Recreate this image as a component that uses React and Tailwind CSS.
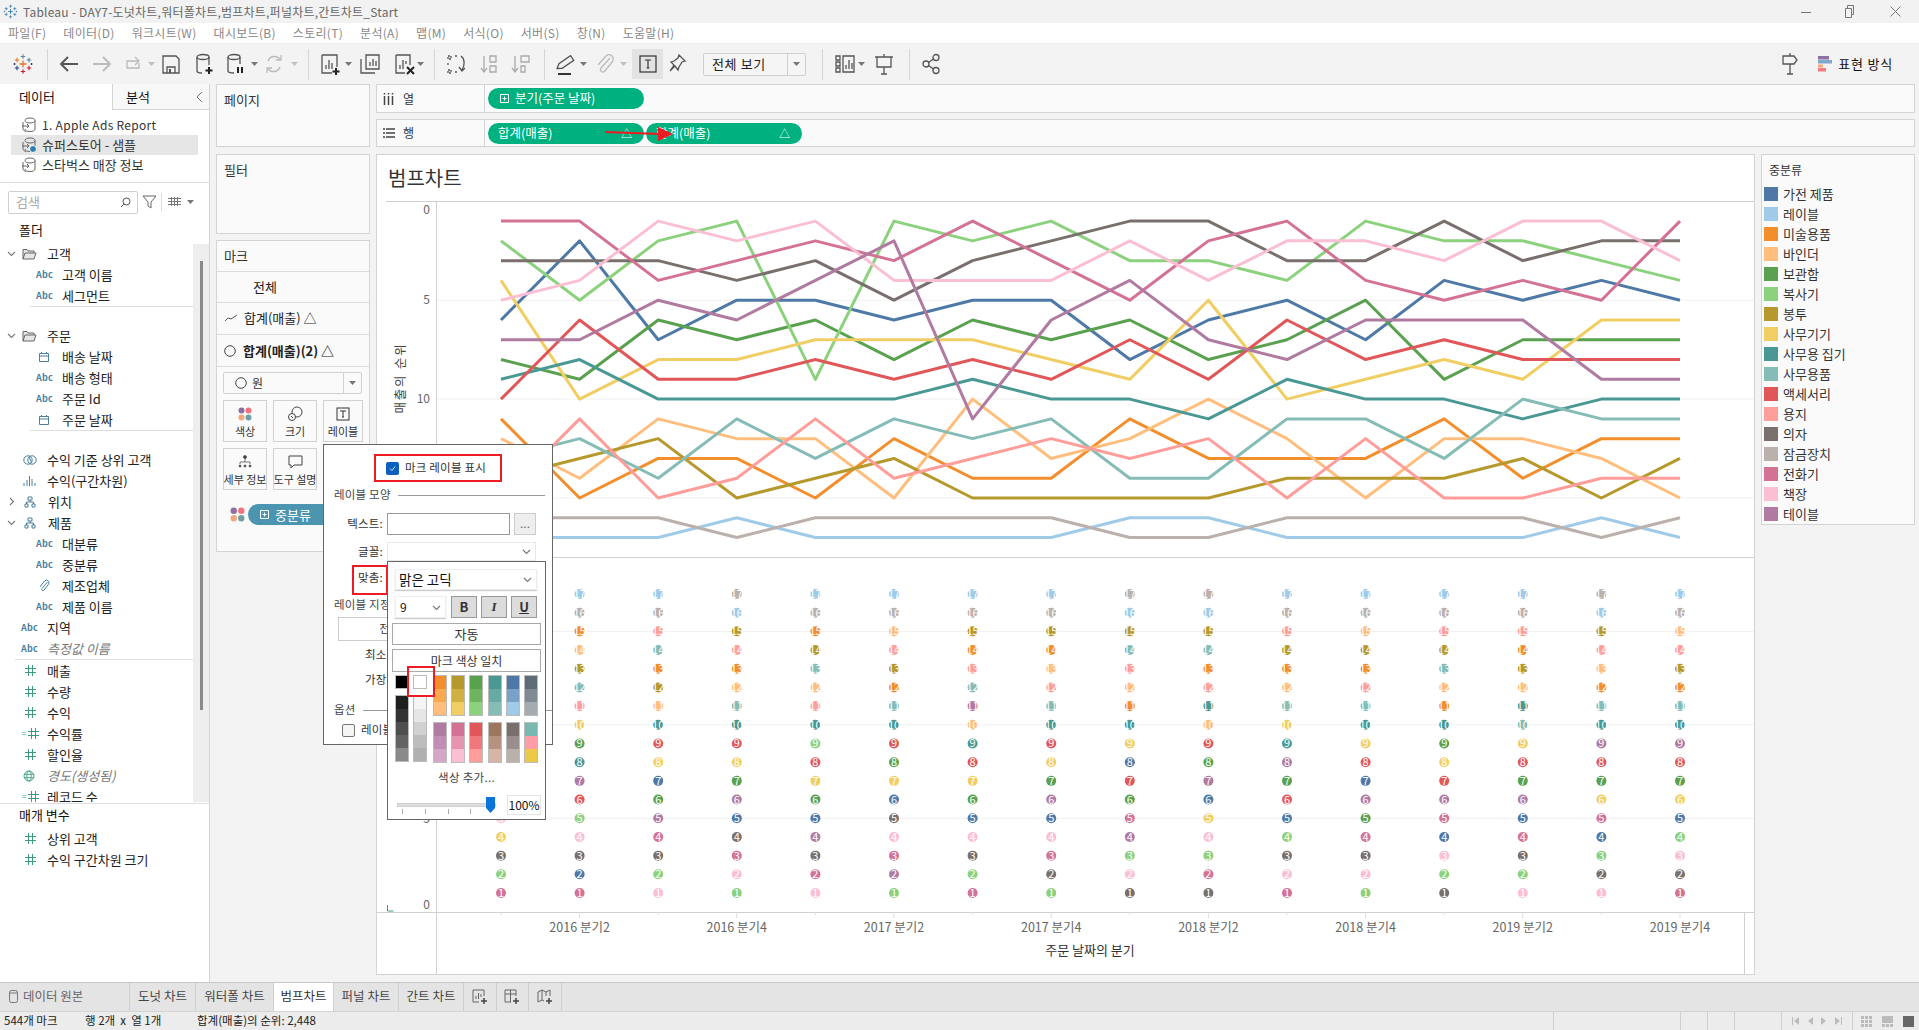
import { useState } from 'react';

const FONT = "font-['Noto_Sans_CJK_KR','Noto_Sans',sans-serif]";

const COLORS = {
  A: '#4e79a7', B: '#a0cbe8', C: '#f28e2b', D: '#ffbe7d', E: '#59a14f', F: '#8cd17d',
  G: '#b6992d', H: '#f1ce63', I: '#499894', J: '#86bcb6', K: '#e15759', L: '#ff9d9a',
  M: '#79706e', N: '#bab0ac', O: '#d37295', P: '#fabfd2', Q: '#b07aa1',
};

const LEGEND = [
  ['A', '가전 제품'], ['B', '레이블'], ['C', '미술용품'], ['D', '바인더'], ['E', '보관함'], ['F', '복사기'],
  ['G', '봉투'], ['H', '사무기기'], ['I', '사무용 집기'], ['J', '사무용품'], ['K', '액세서리'], ['L', '용지'],
  ['M', '의자'], ['N', '잠금장치'], ['O', '전화기'], ['P', '책장'], ['Q', '테이블'],
];

// one string per quarter, letters in rank order (rank 1 first)
const RANKS = [
  'OFMHPAQEIKCDJGLNB', 'OAMPFKQIEHLJGDCNB', 'PFMOQEAHKIDGCJLNB', 'FPOMAQEHKIJDCLGBN',
  'POMQAEHKFILDJGCNB', 'FQOPMAHEKIJCGLDNB', 'OFMPAEHKIDQJLCGNB', 'FMOPAQEHKIJLDCGNB',
  'MPFQOEKAHICDLJGBN', 'MOFPHAQEKDILCJGBN', 'OPMFAKEQIHJDCGLNB', 'FPMOEQAKHIJLCGDNB',
  'MFPAOQKHEICDJGLNB', 'PFMOAQEKHJIDGCLNB', 'PMFAOHEKQIJCDLGBN', 'OMPFAHEKQIJCGLDNB',
];

const QUARTERS = ['2016 분기2', '2016 분기4', '2017 분기2', '2017 분기4', '2018 분기2', '2018 분기4', '2019 분기2', '2019 분기4'];

const xAt = (i) => 501 + 78.6 * i;
const topY = (r) => 201.3 + 19.78 * r;
const lowY = (r) => 911.7 - 18.69 * r;

function Caret({ className = '' }) {
  return (
    <svg width="7" height="4" viewBox="0 0 7 4" className={`shrink-0 ${className}`}>
      <path d="M0 0h7L3.5 4z" fill="#777" />
    </svg>
  );
}

function Chevron({ open = true, className = '' }) {
  return (
    <svg width="9" height="9" viewBox="0 0 9 9" className={`shrink-0 ${className}`} fill="none" stroke="#777" strokeWidth="1.1">
      {open ? <path d="M1 3l3.5 3.5L8 3" /> : <path d="M3 1l3.5 3.5L3 8" />}
    </svg>
  );
}

function Sep({ className = '' }) {
  return <div className={`w-px h-[31px] bg-[#d6d6d6] shrink-0 ${className}`} />;
}

function TableauLogo({ size = 24, mono = false }) {
  const c = mono
    ? { o: '#3f7fb0', b: '#3f7fb0', r: '#3f7fb0', d: '#3f7fb0' }
    : { o: '#e8762b', b: '#5b879b', r: '#c72035', d: '#1f447d' };
  const cross = (x, y, s, col, w = 1.1) => (
    <path key={`${x}-${y}`} d={`M${x - s} ${y}H${x + s}M${x} ${y - s}V${y + s}`} stroke={col} strokeWidth={w} fill="none" />
  );
  return (
    <svg width={size} height={size} viewBox="0 0 24 24" className="shrink-0">
      {cross(12, 12, 3.5, c.o, 1.3)}
      {cross(12, 4.5, 2.2, c.b)}
      {cross(12, 19.5, 2.2, c.r)}
      {cross(6, 8, 2.2, c.o)}
      {cross(18, 8, 2.2, c.b)}
      {cross(6, 16, 2.2, c.d)}
      {cross(18, 16, 2.2, c.r)}
      {cross(3.5, 12, 1, c.d)}
      {cross(20.5, 12, 1, c.d)}
    </svg>
  );
}

function Ico({ children, className = '' }) {
  return (
    <svg width="24" height="24" viewBox="0 0 24 24" fill="none" stroke="#555" strokeWidth="1.3" className={`shrink-0 ${className}`}>
      {children}
    </svg>
  );
}

function Toolbar() {
  return (
    <div className="h-[41px] bg-[#f3f3f3] border-t border-[#ececec] flex items-center pl-[11px] pr-[26px] shrink-0">
      <TableauLogo />
      <Sep className="ml-[12px]" />
      <Ico className="ml-[9px]"><path d="M21 12H4M11 5l-7 7 7 7" strokeWidth="1.9" /></Ico>
      <Ico className="ml-[9px]"><path d="M3 12h17M13 5l7 7-7 7" stroke="#bbb" strokeWidth="1.9" /></Ico>
      <Ico className="ml-[7px]"><path d="M17 9H6v7h12v-5M14 5l4 4-4 4" stroke="#bbb" /></Ico>
      <Caret className="ml-[3px] opacity-40" />
      <Ico className="ml-[4px]"><path d="M4 4h13l3 3v14H4zM8 21v-6h8v6" /><path d="M10 17h2v4h-2z" fill="#555" stroke="none" /></Ico>
      <Ico className="ml-[9px]">
        <ellipse cx="11" cy="5" rx="6" ry="2.5" /><path d="M5 5v14c0 1 2 2 5 2M17 5v8" />
        <path d="M17 15v7M13.5 18.500h7" strokeWidth="2" stroke="#222" />
      </Ico>
      <Ico className="ml-[7px]">
        <ellipse cx="11" cy="5" rx="6" ry="2.5" /><path d="M5 5v14c0 1 2 2 6 2M17 5v7" />
        <path d="M15 15v6M19 15v6" strokeWidth="2" stroke="#222" />
      </Ico>
      <Caret className="ml-[4px]" />
      <Ico className="ml-[4px]"><path d="M6 9a7 7 0 0 1 12-2M18 15a7 7 0 0 1-12 2" stroke="#bbb" strokeWidth="1.5" /><path d="M19 3v5h-5M5 21v-5h5" stroke="#bbb" /></Ico>
      <Caret className="ml-[5px] opacity-40" />
      <Sep className="ml-[10px]" />
      <Ico className="ml-[9px]">
        <path d="M4 3h15v12M4 3v18h10" /><path d="M8 17v-4M11 17V8M14 17v-6" />
        <path d="M18 16v7M14.500 19.500h7" strokeWidth="2" stroke="#222" />
      </Ico>
      <Caret className="ml-[3px]" />
      <Ico className="ml-[6px]">
        <path d="M8 3h13v14H8z" /><path d="M3 7v14h14" /><path d="M12 14v-4M15 14V7M18 14v-5" />
      </Ico>
      <Ico className="ml-[10px]">
        <path d="M4 3h14v10M4 3v18h9" /><path d="M8 17v-4M11 17V8M14 12v-3" />
        <path d="M15 15l7 7M22 15l-7 7" strokeWidth="2" stroke="#222" />
      </Ico>
      <Caret className="ml-[1px]" />
      <Sep className="ml-[10px]" />
      <Ico className="ml-[9px]">
        <path d="M4 4h3v3H4zM11 4h3M4 11v3M4 18h3v3H4zM11 20h2" strokeDasharray="2 1" />
        <path d="M17 4c4 3 4 9 1 14M15 15l3 4 3-3" />
      </Ico>
      <Ico className="ml-[9px]"><path d="M7 4v15M4 16l3 4 3-4" stroke="#aaa" /><path d="M13 4h6v6h-6zM13 14h6v6h-6z" stroke="#aaa" /></Ico>
      <Ico className="ml-[7px]"><path d="M7 4v15M4 16l3 4 3-4" stroke="#aaa" /><path d="M13 4h8v6h-8zM13 14h4v6h-4z" stroke="#aaa" /></Ico>
      <Sep className="ml-[12px]" />
      <Ico className="ml-[9px]">
        <path d="M15 3l4 4L9 17l-5 1 1-5z" transform="rotate(10 12 12)" />
        <path d="M4 22h13" stroke="#333" strokeWidth="2" />
      </Ico>
      <Caret className="ml-[2px]" />
      <Ico className="ml-[5px]"><path d="M18 6l-9 10a2.500 2.500 0 0 0 3.500 3.500L20 10a4 4 0 0 0-6-6l-8 9" stroke="#bbb" /></Ico>
      <Caret className="ml-[4px] opacity-40" />
      <div className="ml-[5px] w-[31px] h-[30px] bg-[#e3e3e3] flex items-center justify-center shrink-0">
        <svg width="18" height="18" viewBox="0 0 18 18" fill="none" stroke="#333" strokeWidth="1.2">
          <rect x="1" y="1" width="16" height="16" /><path d="M6 5h6M9 5v8M7.500 13h3" />
        </svg>
      </div>
      <Ico className="ml-[2px]"><path d="M14 3l6 6-3 1-3 5-1 3-3-4-5 5 4-6-3-3 3-1 4-3z" /></Ico>
      <div className="ml-[14px] w-[103px] h-[23px] bg-[#f5f5f5] border border-[#d0d0d0] rounded-[2px] flex items-center shrink-0">
        <span className="flex-1 pl-[8px] text-[13px] tracking-[0.6px] text-[#222] whitespace-nowrap">전체 보기</span>
        <div className="w-[18px] h-full border-l border-[#d0d0d0] flex items-center justify-center"><Caret /></div>
      </div>
      <Sep className="ml-[16px]" />
      <Ico className="ml-[10px]">
        <path d="M3 4h4v4H3zM3 10h4v4H3zM3 16h4v4H3zM10 4h11v16H10z" />
        <path d="M13 17v-4M16 17V8M19 17v-6" />
      </Ico>
      <Caret className="ml-[1px]" />
      <Ico className="ml-[7px]">
        <path d="M3 5h18M5 5v10h14V5M12 15v7M9 22h6M12 2v3" />
      </Ico>
      <Sep className="ml-[13px]" />
      <Ico className="ml-[9px]">
        <circle cx="7" cy="12" r="3" /><circle cx="17" cy="5.500" r="3" /><circle cx="17" cy="18.500" r="3" />
        <path d="M9.500 10.500l5-3.500M9.500 13.500l5 3.500" />
      </Ico>
      <Ico className="ml-auto mr-[16px]">
        <path d="M12 1v3M5 4h11l3 4-3 4H5zM12 12v10M9 22h6" />
      </Ico>
      <svg width="14" height="16" viewBox="0 0 14 16" className="shrink-0">
        <rect width="11" height="3.500" fill="#8a72a3" />
        <rect y="4" width="14" height="3.500" fill="#7ea6cf" />
        <rect y="8.500" width="5" height="3" fill="#f7a77c" />
        <rect y="12" width="8" height="3.500" fill="#f27c80" />
      </svg>
      <span className="ml-[6px] text-[13px] tracking-[0.8px] text-[#111] whitespace-nowrap">표현 방식</span>
    </div>
  );
}

function AbcIcon() {
  return <span className="text-[9px] font-bold text-[#4a7f9e] w-[26px] shrink-0 tracking-[0.2px]">Abc</span>;
}

function FieldIcon({ type }) {
  if (type === 'abc') return <AbcIcon />;
  const box = 'w-[26px] shrink-0 flex pl-[2px]';
  const blue = '#4a7f9e';
  const green = '#3f9c7a';
  if (type === 'date') {
    return (
      <span className={box}><svg width="12" height="12" viewBox="0 0 12 12" fill="none" stroke={blue}><path d="M1.500 2.500h9v8h-9zM1.500 5h9M3.500 1v2M8.500 1v2" /></svg></span>
    );
  }
  if (type === 'num' || type === 'calc') {
    return (
      <span className="w-[26px] shrink-0 flex items-center justify-center pr-[8px] relative">
        {type === 'calc' && <span className="text-[9px] leading-none text-[#3f9c7a] mr-px">=</span>}
        <svg width="11" height="11" viewBox="0 0 11 11" fill="none" stroke={green}><path d="M3.500 0v11M7.500 0v11M0 3.500h11M0 7.500h11" /></svg>
      </span>
    );
  }
  if (type === 'globe') {
    return (
      <span className={box}><svg width="12" height="12" viewBox="0 0 12 12" fill="none" stroke={green} strokeWidth="0.9"><circle cx="6" cy="6" r="5" /><ellipse cx="6" cy="6" rx="2.200" ry="5" /><path d="M1 4.300h10M1 7.700h10" /></svg></span>
    );
  }
  if (type === 'set') {
    return (
      <span className={box}><svg width="14" height="12" viewBox="0 0 14 12" fill="none" stroke={blue}><circle cx="5" cy="6" r="4.200" /><circle cx="9" cy="6" r="4.200" /><path d="M6 3l3 6" /></svg></span>
    );
  }
  if (type === 'bin') {
    return (
      <span className={box}><svg width="13" height="11" viewBox="0 0 13 11" fill="none" stroke={blue}><path d="M1 8v3M4 5v6M6.500 1v10M9 4v7M12 8v3" /></svg></span>
    );
  }
  if (type === 'tree') {
    return (
      <span className={box}><svg width="12" height="12" viewBox="0 0 12 12" fill="none" stroke={blue}><path d="M4 1h4v3H4zM1 8h3v3H1zM8 8h3v3H8zM6 4v2M2.500 8V6h7v2" /></svg></span>
    );
  }
  if (type === 'clip') {
    return (
      <span className={box}><svg width="12" height="13" viewBox="0 0 12 13" fill="none" stroke={blue}><path d="M9.500 3L4 9.500a1.300 1.300 0 0 0 2 1.700l4.500-6a2.600 2.600 0 0 0-4-3.300L2 8" /></svg></span>
    );
  }
  if (type === 'folder') {
    return (
      <span className="w-[25px] shrink-0 flex"><svg width="15" height="12" viewBox="0 0 15 12" fill="#e6e6e6" stroke="#666"><path d="M1 11V1.500h4l1 1.500h6v2M1 11l2-6h11l-2 6z" /></svg></span>
    );
  }
  return <span className="w-[26px] shrink-0" />;
}

function Field({ type, label, depth = 0, italic = false }) {
  return (
    <div className={`h-[21px] flex items-center whitespace-nowrap ${depth ? 'pl-[36px]' : 'pl-[21px]'}`}>
      <FieldIcon type={type} />
      <span className={italic ? 'italic text-[#777]' : 'text-[#222]'}>{label}</span>
    </div>
  );
}

function Group({ label, type = 'folder', open = true }) {
  return (
    <div className="h-[21px] flex items-center pl-[7px] whitespace-nowrap">
      <Chevron open={open} className="mr-[6px]" />
      <FieldIcon type={type} />
      <span className="text-[#222]">{label}</span>
    </div>
  );
}

function DbIcon({ ok }) {
  return (
    <svg width="16" height="16" viewBox="0 0 16 16" fill="none" stroke="#666" className="shrink-0">
      <path d="M4 3.500C4 2 6 1 9 1s5 1 5 2.500V12c0 1.500-2 2.500-5 2.500S4 13.500 4 12" />
      <path d="M4 3.500C4 5 6 6 9 6s5-1 5-2.500" />
      <path d="M2 5v7c0 1 1 2 3 2.500M1 9h7M6 7l2 2-2 2" />
      {ok && <circle cx="12" cy="12" r="3.500" fill="#2f7fb0" stroke="#fff" />}
    </svg>
  );
}

function DataPane() {
  const sources = [
    ['1. Apple Ads Report', false, 'text-[12px] tracking-[0.3px]'],
    ['슈퍼스토어 - 샘플', true, ''],
    ['스타벅스 매장 정보', false, ''],
  ];
  return (
    <div className="w-[210px] shrink-0 bg-white border-r border-[#d4d4d4] flex flex-col text-[13px]">
      <div className="flex h-[26px] shrink-0">
        <div className="w-[112px] pl-[19px] flex items-center text-[#111]">데이터</div>
        <div className="flex-1 bg-[#f8f8f8] border-l border-b border-[#d4d4d4] pl-[13px] pr-[6px] flex items-center justify-between text-[#111]">
          분석
          <svg width="8" height="12" viewBox="0 0 8 12" fill="none" stroke="#777"><path d="M7 1L2 6l5 5" /></svg>
        </div>
      </div>
      <div className="mt-[5px] mx-[11px] text-[#333]">
        {sources.map(([name, sel, cls]) => (
          <div key={name} className={`h-[20px] flex items-center pl-[10px] whitespace-nowrap ${sel ? 'bg-[#e6e6e6]' : ''}`}>
            <DbIcon ok={sel} />
            <span className={`ml-[5px] ${cls}`}>{name}</span>
          </div>
        ))}
      </div>
      <div className="mt-[7px] h-px bg-[#dedede]" />
      <div className="mt-[8px] flex items-center pl-[8px] h-[22px]">
        <div className="w-[130px] h-[23px] border border-[#cfcfcf] rounded-[2px] flex items-center justify-between pl-[7px] pr-[6px] text-[#aaa]">
          검색
          <svg width="11" height="11" viewBox="0 0 11 11" fill="none" stroke="#555"><circle cx="6.500" cy="4.500" r="3.500" /><path d="M4 7l-3 3" /></svg>
        </div>
        <svg width="15" height="14" viewBox="0 0 15 14" fill="none" stroke="#666" className="ml-[4px]"><path d="M1 1h13L9 7v6l-3-2V7z" /></svg>
        <div className="ml-[4px] w-px h-[18px] bg-[#ddd]" />
        <svg width="13" height="10" viewBox="0 0 13 10" className="ml-[6px]" fill="none" stroke="#777"><path d="M0 1.500h13M0 4.500h13M0 7.500h13M3.500 0v9M6.500 0v9M9.500 0v9" /></svg>
        <Caret className="ml-[6px]" />
      </div>
      <div className="mt-[7px] h-[20px] pl-[19px] flex items-center text-[#111]">폴더</div>
      <div className="mt-[4px] h-[558px] flex overflow-hidden shrink-0">
        <div className="flex-1 min-w-0 -mt-px">
          <Group label="고객" />
          <Field depth={1} type="abc" label="고객 이름" />
          <Field depth={1} type="abc" label="세그먼트" />
          <div className="ml-[30px] h-px bg-[#dedede] mb-[18px]" />
          <Group label="주문" />
          <Field depth={1} type="date" label="배송 날짜" />
          <Field depth={1} type="abc" label="배송 형태" />
          <Field depth={1} type="abc" label="주문 Id" />
          <Field depth={1} type="date" label="주문 날짜" />
          <div className="ml-[30px] h-px bg-[#dedede] mb-[18px]" />
          <Field type="set" label="수익 기준 상위 고객" />
          <Field type="bin" label="수익(구간차원)" />
          <Group label="위치" type="tree" open={false} />
          <Group label="제품" type="tree" />
          <Field depth={1} type="abc" label="대분류" />
          <Field depth={1} type="abc" label="중분류" />
          <Field depth={1} type="clip" label="제조업체" />
          <Field depth={1} type="abc" label="제품 이름" />
          <Field type="abc" label="지역" />
          <Field type="abc" label="측정값 이름" italic />
          <div className="ml-[15px] h-px bg-[#dedede]" />
          <Field type="num" label="매출" />
          <Field type="num" label="수량" />
          <Field type="num" label="수익" />
          <Field type="calc" label="수익률" />
          <Field type="num" label="할인율" />
          <Field type="globe" label="경도(생성됨)" italic />
          <Field type="calc" label="레코드 수" />
        </div>
        <div className="w-[16px] bg-[#eeeeee] shrink-0 pl-[7px] pt-[17px]">
          <div className="w-[2.500px] h-[449px] bg-[#8a8a8a]" />
        </div>
      </div>
      <div className="mt-px h-px bg-[#dedede]" />
      <div className="mt-[1px] h-[20px] pl-[19px] flex items-center text-[#111]">매개 변수</div>
      <div className="mt-[3px]">
        <Field type="num" label="상위 고객" />
        <Field type="num" label="수익 구간차원 크기" />
      </div>
    </div>
  );
}

function ColorDots({ size = 14 }) {
  return (
    <svg width={size} height={size} viewBox="0 0 14 14" className="shrink-0">
      <circle cx="3.500" cy="3.500" r="3" fill="#8e6e9e" />
      <circle cx="10.500" cy="3.500" r="3" fill="#f4727f" />
      <circle cx="3.500" cy="10.500" r="3" fill="#f2a77c" />
      <circle cx="10.500" cy="10.500" r="3" fill="#6fa0a8" />
    </svg>
  );
}

function MarkBtn({ label, w, children }) {
  return (
    <div className={`h-[42px] border border-[#d2d2d2] flex flex-col items-center justify-center shrink-0 ${w}`}>
      <div className="h-[20px] flex items-center">{children}</div>
      <span className="text-[11px] leading-[15px] text-[#333] whitespace-nowrap">{label}</span>
    </div>
  );
}

function MarksCard() {
  const row = 'border-t border-[#dcdcdc] flex items-center text-[13px] text-[#222] whitespace-nowrap';
  return (
    <div className="h-[312px] bg-[#fafafa] border border-[#d4d4d4] flex flex-col overflow-hidden">
      <div className="h-[30px] pl-[7px] flex items-center text-[13px] text-[#333]">마크</div>
      <div className={`${row} h-[31px] pl-[36px]`}>전체</div>
      <div className={`${row} h-[32px] pl-[7px] pb-[2px]`}>
        <svg width="14" height="8" viewBox="0 0 14 8" fill="none" stroke="#555" className="mr-[6px]"><path d="M1 7l3-3 3 1 6-4" /></svg>
        합계(매출) △
      </div>
      <div className={`${row} h-[32px] pl-[7px] font-bold`}>
        <svg width="12" height="12" viewBox="0 0 12 12" fill="none" stroke="#444" className="mr-[7px]"><circle cx="6" cy="6" r="5.300" /></svg>
        합계(매출)(2) △
      </div>
      <div className="border-t border-[#dcdcdc] pt-[5px] pl-[6px]">
        <div className="w-[139px] h-[22px] border border-[#d2d2d2] rounded-[2px] flex items-center">
          <svg width="12" height="12" viewBox="0 0 12 12" fill="none" stroke="#444" className="ml-[11px]"><circle cx="6" cy="6" r="5.300" /></svg>
          <span className="ml-[5px] flex-1 text-[12px] text-[#333]">원</span>
          <div className="w-[18px] h-full border-l border-[#d2d2d2] flex items-center justify-center"><Caret /></div>
        </div>
        <div className="mt-[6px] flex gap-x-[6px]">
          <MarkBtn label="색상" w="w-[44px]"><ColorDots /></MarkBtn>
          <MarkBtn label="크기" w="w-[44px]">
            <svg width="16" height="16" viewBox="0 0 16 16" fill="none" stroke="#444"><circle cx="10" cy="6" r="5" /><circle cx="5" cy="11" r="3.500" fill="#fafafa" /><path d="M4 10l2 2" /></svg>
          </MarkBtn>
          <MarkBtn label="레이블" w="w-[40px]">
            <svg width="14" height="14" viewBox="0 0 14 14" fill="none" stroke="#333"><rect x="1" y="1" width="12" height="12" /><path d="M4 4h6M7 4v6M6 10h2" /></svg>
          </MarkBtn>
        </div>
        <div className="mt-[6px] flex gap-x-[6px]">
          <MarkBtn label="세부 정보" w="w-[44px]">
            <svg width="14" height="14" viewBox="0 0 14 14" fill="#444" stroke="#444" strokeWidth="0.7"><circle cx="7" cy="2" r="1.500" /><path d="M7 3v4M2 9V7h10v2" fill="none" /><circle cx="2" cy="11" r="1" /><circle cx="7" cy="11" r="1" /><circle cx="12" cy="11" r="1" /></svg>
          </MarkBtn>
          <MarkBtn label="도구 설명" w="w-[44px]">
            <svg width="15" height="14" viewBox="0 0 15 14" fill="none" stroke="#444"><path d="M1 1h13v9H6l-3 3v-3H1z" /></svg>
          </MarkBtn>
        </div>
        <div className="mt-[14px] ml-[7px] flex items-center">
          <ColorDots size={15} />
          <div className="ml-[3px] w-[90px] h-[21px] rounded-l-[11px] bg-[#4b95b0] flex items-center pl-[12px] text-[13px] text-white whitespace-nowrap">
            <svg width="9" height="9" viewBox="0 0 9 9" fill="none" stroke="#fff" className="mr-[6px]"><path d="M.5.500h8v8h-8zM2.500 4.500h4M4.500 2.500v4" /></svg>
            중분류
          </div>
        </div>
      </div>
    </div>
  );
}

function Pill({ children, w = 'w-[156px]', className = '' }) {
  return (
    <div className={`h-[21px] rounded-[11px] bg-[#00b180] flex items-center text-[12.500px] text-white whitespace-nowrap shrink-0 ${w} ${className}`}>
      {children}
    </div>
  );
}

function Shelf({ h, icon, label, children }) {
  return (
    <div className={`${h} bg-[#fafafa] border border-[#d4d4d4] flex items-center`}>
      <div className="w-[108px] h-full border-r border-[#d4d4d4] flex items-center pl-[6px] text-[12px] text-[#333] shrink-0">
        <span className="w-[20px]">{icon}</span>
        {label}
      </div>
      <div className="pl-[3px] flex gap-[2px]">{children}</div>
    </div>
  );
}

function Chart() {
  return (
    <svg viewBox="377 201 1377 773" className="block w-[1377px] h-[773px]">
      {/* panes */}
      <path d="M386 201.500H1754M386 557.500H1754M377 912.500H1754" stroke="#d0d0d0" fill="none" />
      <path d="M436.500 201V974" stroke="#d0d0d0" />
      <path d="M1744.500 912V974" stroke="#d0d0d0" />
      {[5, 10, 15].map((r) => (
        <g key={r}>
          <path d={`M437 ${topY(r)}H1754`} stroke="#f0f0f0" />
          <path d={`M437 ${lowY(r)}H1754`} stroke="#f0f0f0" />
        </g>
      ))}
      {/* rank lines */}
      {LEGEND.map(([key]) => (
        <polyline
          key={key}
          fill="none"
          stroke={COLORS[key]}
          strokeWidth="3"
          strokeLinejoin="round"
          points={RANKS.map((col, i) => `${xAt(i)},${topY(col.indexOf(key) + 1)}`).join(' ')}
        />
      ))}
      {/* rank dots */}
      {RANKS.map((col, i) =>
        col.split('').map((key, r) => (
          <g key={`${i}-${key}`}>
            <circle cx={xAt(i)} cy={lowY(r + 1)} r="5" fill={COLORS[key]} />
            <text x={xAt(i)} y={lowY(r + 1) + 4} textAnchor="middle" fontSize="11" fill="#fff">{r + 1}</text>
          </g>
        ))
      )}
      {/* axis labels */}
      <g fontSize="12" fill="#666" textAnchor="end">
        <text x="430" y="214">0</text>
        <text x="430" y="304">5</text>
        <text x="430" y="403">10</text>
        <text x="430" y="636">15</text>
        <text x="430" y="729">10</text>
        <text x="430" y="823">5</text>
        <text x="430" y="909">0</text>
      </g>
      <text transform="translate(405 378) rotate(-90)" textAnchor="middle" fontSize="12.500" letterSpacing="1.800" fill="#444">매출의 순위</text>
      {RANKS.map((_, i) => (
        <path key={i} d={`M${xAt(i)} 912V${i % 2 ? 918 : 915}`} stroke="#ddd" />
      ))}
      {QUARTERS.map((q, i) => (
        <text key={q} x={xAt(i * 2 + 1)} y="932" textAnchor="middle" fontSize="12.500" fill="#666">{q}</text>
      ))}
      <text x="1090" y="955" textAnchor="middle" fontSize="13" fill="#333">주문 날짜의 분기</text>
      <path d="M387.500 905v6h6" stroke="#3f9c7a" fill="none" />
    </svg>
  );
}

function Legend() {
  return (
    <div className="w-[154px] h-[371px] bg-[#fafafa] border border-[#d4d4d4] pt-[7px] pl-[2px] shrink-0 text-[13px] text-[#333]">
      <div className="h-[16px] pl-[5px] flex items-center text-[12px]">중분류</div>
      <div className="mt-[6px]">
        {LEGEND.map(([key, name]) => (
          <div key={key} className="h-[20px] flex items-center whitespace-nowrap">
            <svg width="14" height="14" className="shrink-0"><rect width="14" height="14" fill={COLORS[key]} /></svg>
            <span className="ml-[5px]">{name}</span>
          </div>
        ))}
      </div>
    </div>
  );
}

function Check({ on }) {
  return on ? (
    <span className="w-[13px] h-[13px] rounded-[2px] bg-[#0a5fbf] flex items-center justify-center shrink-0">
      <svg width="9" height="9" viewBox="0 0 9 9" fill="none" stroke="#cfe2f7"><path d="M2 4.500l2 2 3-4" /></svg>
    </span>
  ) : (
    <span className="w-[13px] h-[13px] rounded-[2px] bg-[#f5f5f5] border border-[#777] shrink-0" />
  );
}

function Heading({ label, line = true, className = '' }) {
  return (
    <div className={`h-[16px] ml-[10px] flex items-center whitespace-nowrap text-[#444] ${className}`}>
      {label}
      {line && <div className="ml-[7px] flex-1 h-px bg-[#999]" />}
    </div>
  );
}

function LabelPopup() {
  const [shown] = useState(true);
  return (
    <div className="absolute left-[323px] top-[444px] w-[230px] h-[301px] bg-white border border-[#666] text-[11.500px] tracking-[0.2px] text-[#333]">
      <div className="mt-[9px] ml-[50px] w-[128px] h-[28px] border-2 border-[#ed1c24] flex items-center pl-[10px] whitespace-nowrap">
        <Check on={shown} />
        <span className="ml-[6px]">마크 레이블 표시</span>
      </div>
      <Heading label="레이블 모양" className="mt-[5px] mr-[7px]" />
      <div className="mt-[10px] flex items-center h-[22px]">
        <span className="w-[63px] pr-[4px] text-right">텍스트:</span>
        <div className="w-[123px] h-full border border-[#999]" />
        <div className="ml-[4px] w-[22px] h-full bg-[#eeeeee] border border-[#ccc] flex items-center justify-center text-[#666] leading-none">...</div>
      </div>
      <div className="mt-[7px] flex items-center h-[19px]">
        <span className="w-[63px] pr-[4px] text-right">글꼴:</span>
        <div className="w-[149px] h-full border border-[#e8e8e8] flex items-center justify-end pr-[4px]"><Chevron /></div>
      </div>
      <div className="mt-[9px] h-[16px] flex items-center">
        <span className="w-[63px] pr-[4px] text-right">맞춤:</span>
      </div>
      <Heading label="레이블 지정" line={false} className="mt-[11px]" />
      <div className="mt-[4px] ml-[14px] w-[104px] h-[24px] border border-[#ccc] flex items-center justify-center">전체</div>
      <div className="mt-[6px] h-[16px] pl-[41px] flex items-center whitespace-nowrap">최소값:</div>
      <div className="mt-[9px] h-[16px] pl-[41px] flex items-center whitespace-nowrap">가장 가까운</div>
      <Heading label="옵션" className="mt-[14px]" />
      <div className="mt-[4px] ml-[18px] h-[16px] flex items-center whitespace-nowrap">
        <Check on={false} />
        <span className="ml-[6px]">레이블 겹치기 허용</span>
      </div>
      <div className="absolute left-[28px] top-[120px] w-[36px] h-[30px] border-2 border-[#ed1c24]" />
    </div>
  );
}

const SWATCHES = [
  ['#f28e2b', '#fba94e', '#ffbe7d'], ['#b6992d', '#d0b043', '#f1ce63'], ['#59a14f', '#6eb45f', '#8cd17d'],
  ['#499894', '#67a9a3', '#86bcb6'], ['#4e79a7', '#78a2c8', '#a0cbe8'], ['#5f6b77', '#808a92', '#a5acaf'],
  ['#b07aa1', '#c28eb5', '#d4a6c8'], ['#d37295', '#e695b0', '#fabfd2'], ['#e15759', '#f1787a', '#ff9d9a'],
  ['#9d7660', '#b6917e', '#d7b5a6'], ['#79706e', '#9a8e8c', '#bab0ac'], ['#79b8b0', '#ff9da7', '#edc948'],
];

function ColorColumn({ cells, cell }) {
  return (
    <div className="w-[14px] border border-[#bbb] flex flex-col">
      {cells.map((c) => (
        <svg key={c} width="12" className={`block ${cell}`}><rect width="12" height="20" fill={c} /></svg>
      ))}
    </div>
  );
}

function FontPopup() {
  const boxBtn = 'w-[26px] h-full bg-[#dcdcdc] border border-[#999] flex items-center justify-center text-[13px] font-bold text-[#333]';
  const wideBtn = 'ml-[4px] w-[149px] border border-[#aaa] flex items-center justify-center';
  return (
    <div className="absolute left-[387px] top-[561px] w-[159px] h-[259px] bg-white border border-[#666] text-[11.500px] text-[#333]">
      <div className="mt-[7px] ml-[7px] w-[142px] h-[21px] border border-[#eee] shadow-[0_1px_1px_#ccc] flex items-center justify-between pl-[3px] pr-[4px] text-[13.500px] text-[#111] whitespace-nowrap">
        맑은 고딕
        <Chevron />
      </div>
      <div className="mt-[6px] ml-[7px] h-[22px] flex">
        <div className="w-[51px] h-full border border-[#eee] shadow-[0_1px_1px_#ccc] flex items-center justify-between pl-[4px] pr-[4px] text-[12px] text-[#111]">9<Chevron /></div>
        <div className="ml-[5px] flex gap-[4px] h-full">
          <div className={boxBtn}>B</div>
          <div className={`${boxBtn} italic font-['Liberation_Serif',serif]`}>I</div>
          <div className={`${boxBtn} underline`}>U</div>
        </div>
      </div>
      <div className={`${wideBtn} mt-[5px] h-[22px] text-[13px]`}>자동</div>
      <div className={`${wideBtn} mt-[4px] h-[23px] text-[12px]`}>마크 색상 일치</div>
      <div className="mt-[3px] ml-[7px] flex">
        <div className="flex flex-col gap-[6px]">
          <ColorColumn cells={['#000000']} cell="h-[12px]" />
          <ColorColumn cells={['#1f1f1f', '#333333', '#4f4f4f', '#636363', '#8a8a8a']} cell="h-[13px]" />
        </div>
        <div className="ml-[4px] flex flex-col gap-[6px]">
          <ColorColumn cells={['#ffffff']} cell="h-[12px]" />
          <ColorColumn cells={['#f5f5f5', '#e6e6e6', '#d1d1d1', '#bdbdbd', '#b0b0b0']} cell="h-[13px]" />
        </div>
        <div className="ml-[6px] grid grid-cols-[repeat(6,14px)] gap-x-[4.200px] gap-y-[6px]">
          {SWATCHES.map((cells) => <ColorColumn key={cells[0]} cells={cells} cell="h-[13px]" />)}
        </div>
      </div>
      <div className="mt-[7px] h-[16px] flex items-center justify-center tracking-[0.3px] text-[#444]">색상 추가...</div>
      <div className="mt-[9px] h-[20px] flex items-center">
        <div className="ml-[9px] w-[99px] h-[4px] bg-[#dddddd] border border-[#cfcfcf] relative">
          <svg width="69" height="5" viewBox="0 0 69 5" className="absolute left-[4px] top-[5px]" stroke="#aaa"><path d="M.5 0v5M23.500 0v5M46.500 0v5M68.500 0v5" /></svg>
          <svg width="9" height="16" viewBox="0 0 9 16" className="absolute right-0 -top-[7px]"><path d="M0 0h9v11l-4.500 5L0 11z" fill="#0a74da" /></svg>
        </div>
        <div className="ml-[11px] w-[34px] h-full border border-[#e4e4e4] flex items-center justify-center text-[12px] text-[#111]">100%</div>
      </div>
      <div className="absolute left-[19px] top-[104px] w-[28px] h-[31px] border-2 border-[#ed1c24]" />
    </div>
  );
}

function WindowButtons() {
  return (
    <div className="flex items-center pr-[18px]">
      <svg width="10" height="10" viewBox="0 0 10 10" stroke="#777"><path d="M0 5.500h10" /></svg>
      <svg width="10" height="13" viewBox="0 0 10 13" fill="none" stroke="#777" className="ml-[34px]"><path d="M.5 3.500h6v9h-6zM2.500 3.500v-3h6v9h-2" /></svg>
      <svg width="11" height="11" viewBox="0 0 11 11" stroke="#777" className="ml-[35px]"><path d="M.5.500l10 10M10.500.500l-10 10" /></svg>
    </div>
  );
}

function Tab({ label, w, active }) {
  return (
    <div className={`h-full border-r border-[#cfcfcf] pb-[2px] flex items-center justify-center whitespace-nowrap text-[12.500px] shrink-0 ${w} ${active ? 'bg-white text-[#333]' : 'text-[#444]'}`}>
      {label}
    </div>
  );
}

function AddTab({ children }) {
  return (
    <div className="w-[32.500px] h-full border-r border-[#cfcfcf] flex items-center justify-center shrink-0">
      <svg width="16" height="16" viewBox="0 0 16 16" fill="none" stroke="#666">
        {children}
        <path d="M12 9v6M9 12h6" stroke="#444" strokeWidth="1.500" />
      </svg>
    </div>
  );
}

export default function App() {
  const menus = ['파일(F)', '데이터(D)', '워크시트(W)', '대시보드(B)', '스토리(T)', '분석(A)', '맵(M)', '서식(O)', '서버(S)', '창(N)', '도움말(H)'];
  return (
    <div className={`relative w-[1919px] h-[1030px] overflow-hidden flex flex-col bg-[#f3f3f3] ${FONT}`}>
      {/* Title bar */}
      <div className="h-[23px] flex items-center justify-between bg-[#f2f2f2] shrink-0">
        <div className="flex items-center pl-[2px] whitespace-nowrap text-[12px] tracking-[0.22px] text-[#666]">
          <TableauLogo size={17} mono />
          <span className="ml-[4px]">Tableau - DAY7-도넛차트,워터폴차트,범프차트,퍼널차트,간트차트_Start</span>
        </div>
        <WindowButtons />
      </div>

      {/* Menu */}
      <div className="h-[20px] bg-white flex items-center gap-[17px] pl-[8px] text-[12px] tracking-[0.3px] text-[#888] shrink-0 whitespace-nowrap">
        {menus.map((m) => <span key={m}>{m}</span>)}
      </div>

      <Toolbar />

      {/* Workspace */}
      <div className="flex-1 min-h-0 flex">
        <DataPane />
        <div className="ml-[6px] w-[154px] shrink-0 flex flex-col text-[13px] text-[#333]">
          <div className="h-[63px] bg-[#fafafa] border border-[#d4d4d4] pl-[7px] pt-[5px]">페이지</div>
          <div className="mt-[7px] h-[80px] bg-[#fafafa] border border-[#d4d4d4] pl-[7px] pt-[5px]">필터</div>
          <div className="mt-[6px]"><MarksCard /></div>
        </div>
        <div className="ml-[6px] w-[1539px] flex flex-col">
          <Shelf
            h="h-[29px]"
            label="열"
            icon={<svg width="11" height="12" viewBox="0 0 11 12" stroke="#444" strokeWidth="1.500"><path d="M1.500 3v9M5.500 3v9M9.500 3v9M1.500 0v1.500M5.500 0v1.500M9.500 0v1.500" /></svg>}
          >
            <Pill>
              <svg width="9" height="9" viewBox="0 0 9 9" fill="none" stroke="#fff" className="ml-[12px] mr-[6px]"><path d="M.5.500h8v8h-8zM2.500 4.500h4M4.500 2.500v4" /></svg>
              분기(주문 날짜)
            </Pill>
          </Shelf>
          <div className="mt-[6px]">
            <Shelf
              h="h-[28px]"
              label="행"
              icon={<svg width="12" height="10" viewBox="0 0 12 10" stroke="#444" strokeWidth="1.300"><path d="M0 1h2M3 1h9M0 5h2M3 5h9M0 9h2M3 9h9" /></svg>}
            >
              <Pill className="justify-between pl-[10px] pr-[12px]">합계(매출)<span className="text-[11px]">△</span></Pill>
              <Pill className="justify-between pl-[10px] pr-[12px]">합계(매출)<span className="text-[11px]">△</span></Pill>
            </Shelf>
          </div>
          <div className="mt-[7px] flex gap-[6px] items-start">
            <div className="w-[1379px] h-[821px] bg-white border border-[#d4d4d4] shrink-0">
              <div className="h-[46px] pl-[11px] flex items-center text-[20px] text-[#333]">범프차트</div>
              <Chart />
            </div>
            <Legend />
          </div>
        </div>
      </div>

      {/* Sheet tabs */}
      <div className="h-[29px] bg-[#e4e4e4] border-t border-[#c8c8c8] flex shrink-0">
        <div className="w-[130px] h-full border-r border-[#cfcfcf] pb-[2px] flex items-center pl-[9px] text-[12.500px] text-[#666] whitespace-nowrap shrink-0">
          <svg width="9" height="13" viewBox="0 0 9 13" fill="none" stroke="#777" className="mr-[5px]"><rect x=".5" y=".5" width="8" height="12" rx="2" /><path d="M.5 3h8" /></svg>
          데이터 원본
        </div>
        <Tab label="도넛 차트" w="w-[66px]" />
        <Tab label="워터폴 차트" w="w-[78px]" />
        <Tab label="범프차트" w="w-[60px]" active />
        <Tab label="퍼널 차트" w="w-[65px]" />
        <Tab label="간트 차트" w="w-[65px]" />
        <AddTab><path d="M1 1h11v6M1 1v12h6M4 10V7M6.500 10V4M9 8V5" /></AddTab>
        <AddTab><path d="M1 1h11v6M1 1v12h6M1 5h11M6.500 1v12" /></AddTab>
        <AddTab><path d="M1 3l4-2 4 2 4-2v6M1 3v10l4-2 2 1M5 1v10M9 3v4" /></AddTab>
      </div>

      {/* Status bar */}
      <div className="h-[19px] bg-[#ececec] border-t border-[#d4d4d4] flex items-center text-[11.500px] text-[#222] whitespace-nowrap shrink-0">
        <span className="w-[85px] pl-[4px]">544개 마크</span>
        <span className="w-[112px]">행 2개 &nbsp;x&nbsp; 열 1개</span>
        <span>합계(매출)의 순위: 2,448</span>
        <div className="ml-auto flex h-full items-center">
          {['w-[127px]', 'w-[27px]', 'w-[27px]', 'w-[47px]'].map((w, i) => (
            <div key={i} className={`${w} h-full border-l border-[#cfcfcf]`} />
          ))}
          <div className="w-[71px] h-full border-l border-[#cfcfcf] flex items-center justify-around px-[6px]">
            <svg width="7" height="8" viewBox="0 0 7 8" fill="#bbb"><path d="M0 0h1v8H0zM7 0v8L2 4z" /></svg>
            <svg width="5" height="8" viewBox="0 0 5 8" fill="#bbb"><path d="M5 0v8L0 4z" /></svg>
            <svg width="5" height="8" viewBox="0 0 5 8" fill="#bbb"><path d="M0 0v8l5-4z" /></svg>
            <svg width="7" height="8" viewBox="0 0 7 8" fill="#bbb"><path d="M6 0h1v8H6zM0 0v8l5-4z" /></svg>
          </div>
          <div className="w-[67px] h-full border-l border-[#cfcfcf] flex items-center pl-[8px] gap-[10px]">
            <svg width="11" height="11" viewBox="0 0 11 11" fill="#bbb"><path d="M0 0h3v3H0zM4 0h3v3H4zM8 0h3v3H8zM0 4h3v3H0zM4 4h3v3H4zM8 4h3v3H8zM0 8h3v3H0zM4 8h3v3H4zM8 8h3v3H8z" /></svg>
            <svg width="11" height="11" viewBox="0 0 11 11" fill="#bbb"><path d="M0 0h11v7H0zM0 8h3v3H0zM4 8h3v3H4zM8 8h3v3H8z" /></svg>
            <svg width="11" height="11" viewBox="0 0 11 11" fill="#666"><path d="M0 0h11v11H0z" /></svg>
          </div>
        </div>
      </div>

      {/* Popups and annotation lying over the page */}
      <LabelPopup />
      <FontPopup />
      <svg width="72" height="16" viewBox="0 0 72 16" className="absolute left-[604px] top-[125px]">
        <path d="M1 7l56 2" stroke="#ed1c24" strokeWidth="2" />
        <path d="M54 2l15 7-15 7z" fill="#ed1c24" />
      </svg>
    </div>
  );
}
